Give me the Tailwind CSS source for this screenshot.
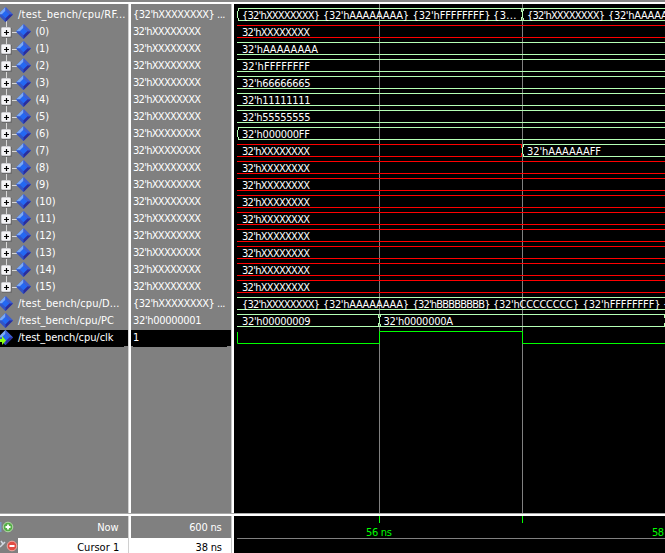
<!DOCTYPE html>
<html lang="en"><head><meta charset="utf-8"><title>Wave</title>
<script src="https://cdn.jsdelivr.net/npm/@tailwindcss/browser@4"></script></head>
<body class="w-[665px] h-[553px] overflow-hidden bg-[#808080] font-['DejaVu_Sans_Condensed','DejaVu_Sans',sans-serif] [font-stretch:condensed] text-[11px] text-white">
<svg width="0" height="0" class="absolute"><defs>
<g id="gem"><path d="M0-7.5L7.5 0 0 7.5-7.5 0Z" fill="#3159ce"/><path d="M0-7.5V-3.5L-3.5 0H-7.5Z" fill="#7baaf7"/><path d="M0-7.5L7.5 0H3.5L0-3.5Z" fill="#3f5fd0"/><path d="M-7.5 0H-3.5L0 3.5V7.5Z" fill="#3455c4"/><path d="M7.5 0L0 7.5V3.5L3.5 0Z" fill="#2a2d9c"/><path d="M0-3.8L3.8 0 0 3.8-3.8 0Z" fill="#2468f2"/></g>
<g id="plus"><rect x="1.5" y="3.5" width="9" height="9" rx="1" fill="#f4f4f6" stroke="#d0d0d4"/><path d="M2 13.5H11.5V4" fill="none" stroke="#6a6a6a"/><path d="M4 8.5H9M6.5 6V11" stroke="#000" stroke-width="1.2"/></g>
</defs></svg>
<div class="flex flex-col h-[553px]">
 <div class="h-[2px] bg-[#858585] shrink-0"></div>
 <div class="flex h-[511px] shrink-0 border-t-2 border-white">
  <div class="w-[128px] pt-[3px] shrink-0 overflow-hidden"><div id="names"></div></div>
  <div class="w-[3px] bg-white border-l border-[#d0d0d0] shrink-0"></div>
  <div class="w-[100px] pt-[3px] shrink-0 overflow-hidden"><div id="values"></div></div>
  <div class="w-[3px] bg-white border-l border-[#c8c8c8] shrink-0"></div>
  <svg id="waves" class="bg-black shrink-0" width="431" height="509" viewBox="234 4 431 509"></svg>
 </div>
 <div class="h-[3px] bg-white border-t border-[#a8a8a8] shrink-0"></div>
 <div class="flex h-[37px] shrink-0">
  <div class="w-[128px] shrink-0">
   <div class="h-[22px] flex justify-between"><svg width="18" height="22"><path d="M0 6V16" stroke="#7897c6" stroke-width="3"/><circle cx="8" cy="11" r="4.8" fill="#55ae48" stroke="#b4dba9"/><path d="M5.5 11H10.5M8 8.5V13.5" stroke="#fff" stroke-width="1.8"/></svg><svg width="110" height="22"><text x="79.2" y="15" fill="#fff" textLength="21.5">Now</text></svg></div>
   <div class="h-[15px] flex"><svg width="18" height="15"><path d="M0 9L4 5M1 3L3 6 5 4" stroke="#d3d9e2" stroke-width="1.5" fill="none"/><circle cx="12" cy="8" r="4.8" fill="#e24d45" stroke="#f0aaa2"/><path d="M9.5 8H14.5" stroke="#fff" stroke-width="2"/></svg><svg class="bg-white" width="110" height="15"><text x="59.2" y="13" textLength="42">Cursor 1</text></svg></div>
  </div>
  <div class="w-[3px] bg-white border-l border-[#d0d0d0] shrink-0"></div>
  <div class="w-[100px] shrink-0"><svg width="100" height="22"><text x="58.2" y="15" fill="#fff" textLength="32.5">600 ns</text></svg><svg class="bg-white" width="100" height="15"><text x="64.5" y="13" textLength="26.5">38 ns</text></svg></div>
  <div class="w-[3px] bg-white border-l border-[#c8c8c8] shrink-0"></div>
  <svg class="bg-black shrink-0" width="431" height="37" viewBox="234 516 431 37"><path d="M379.5 516V523M522.5 516V523" stroke="#0f0"/><path d="M237 538.5H665" stroke="#808080"/><text x="366" y="536" fill="#0f0" textLength="26">56 ns</text><text x="652" y="536" fill="#0f0" textLength="12">58</text></svg>
 </div>
</div>
<script>
const X="32'hXXXXXXXX";
const txt=(s,x,y,w)=>`<text x="${x}" y="${y}" textLength="${w}" fill="#fff" xml:space="preserve">${s}</text>`;
const names=[["/test_bench/cpu/RF...",107.5]];
for(let i=0;i<16;i++)names.push([`(${i})`,i<10?13.5:20]);
names.push(["/test_bench/cpu/D...",101.5],["/test_bench/cpu/PC",96],["/test_bench/cpu/clk",95.5]);
document.getElementById('names').innerHTML=names.map(([n,w],i)=>{
 const kid=i>0&&i<17;
 return `<svg class="block" width="128" height="17">${i==19?'<path d="M0 0H128V16H124V17H0Z" fill="#000"/>':''}${kid?`<path d="M6.5 0V${i==16?8:17}M12 8.5H17" stroke="#d8d8d8"/><use href="#plus"/>`:i==0?'<path d="M6.5 14V17" stroke="#d8d8d8"/>':''}<use href="#gem" x="${kid?23.5:5.5}" y="7.5"/>${i==19?'<path d="M0 9H2V6L6 10.5 2 15V12H0Z" fill="#8dff13"/>':''}${txt(n,kid?35.5:18,11,w)}</svg>`}).join('');
document.getElementById('values').innerHTML=names.map((_,i)=>{
 const t=i==0||i==17?["{"+X+"} ...",92.5]:i==18?["32'h00000001",68.5]:i==19?["1",6]:[X,68];
 return `<svg class="block" width="100" height="17">${i==19?'<path d="M0 0H100V16H96V17H2V16H0Z" fill="#000"/>':''}${txt(t[0],2,11,t[1])}</svg>`}).join('');
const G="#b4ffb4",R="#f00",b=c=>`{32'h${c.repeat(8)}}`;
let s='<path d="M379.5 4V513M522.5 4V513" stroke="#808080"/>';
const line=(x1,x2,y,c)=>`<path d="M${x1} ${y+.5}H${x2}M${x1} ${y+12.5}H${x2}" stroke="${c}"/>`;
const edge=(x,y,c)=>`<path d="M${x+.5} ${y+3}V${y+10}M${x+1.5} ${y+1}V${y+3}M${x+1.5} ${y+10}V${y+12}" stroke="${c}" fill="none"/>`;
const close=(x,y,c)=>`<path d="M${x-.5} ${y+1}V${y+4}M${x-.5} ${y+9}V${y+12}" stroke="${c}"/>`;
const data={1:[X,68],2:["32'hAAAAAAAA",76],3:["32'hFFFFFFFF",68],4:["32'h66666665",68.5],5:["32'h11111111",68.5],6:["32'h55555555",68.5],7:["32'h000000FF",68]};
for(let i=0;i<19;i++){
 const y=8+17*i,c=(i==1||i>7&&i<17)?R:G;
 if(i==8)s+=line(237,522,y,R)+close(522,y,R)+line(523,665,y,G)+edge(522,y,G)+txt("32'hAAAAAAFF",527,y+11,74);
 else s+=line(i==0||i==7?238:237,665,y,c);
 if(i==0||i==7)s+=edge(237,y,c);
 if(i==0)s+=edge(522,y,c)+close(522,y,c);
 if(i==18)s+=edge(379,y,c)+close(379,y,c)+close(665,y,c)+txt("32'h00000009",242,y+11,68.5)+txt("32'h0000000A",383.5,y+11,69.5);
 else if(i==0)s+=txt(b("X"),242,y+11,78)+txt(b("A"),323,y+11,86)+txt(b("F"),412.5,y+11,78)+txt("{3...",493,y+11,23.5)+txt(b("X"),527,y+11,78)+txt(b("A"),608,y+11,86);
 else if(i==17)s+=txt(b("X"),242,y+11,78)+txt(b("A"),323,y+11,86)+txt(b("B"),412.5,y+11,78)+txt(b("C"),493,y+11,86)+txt(b("F"),582.5,y+11,78)+txt("{",663,y+11,5.5);
 else{const d=data[i]||[X,68];s+=txt(d[0],242,y+11,d[1]);}
}
s+='<path d="M237.5 332V343.5H379.5V331.5H522.5V343.5H665" fill="none" stroke="#0f0"/>';
document.getElementById('waves').innerHTML=s;
</script></body></html>
